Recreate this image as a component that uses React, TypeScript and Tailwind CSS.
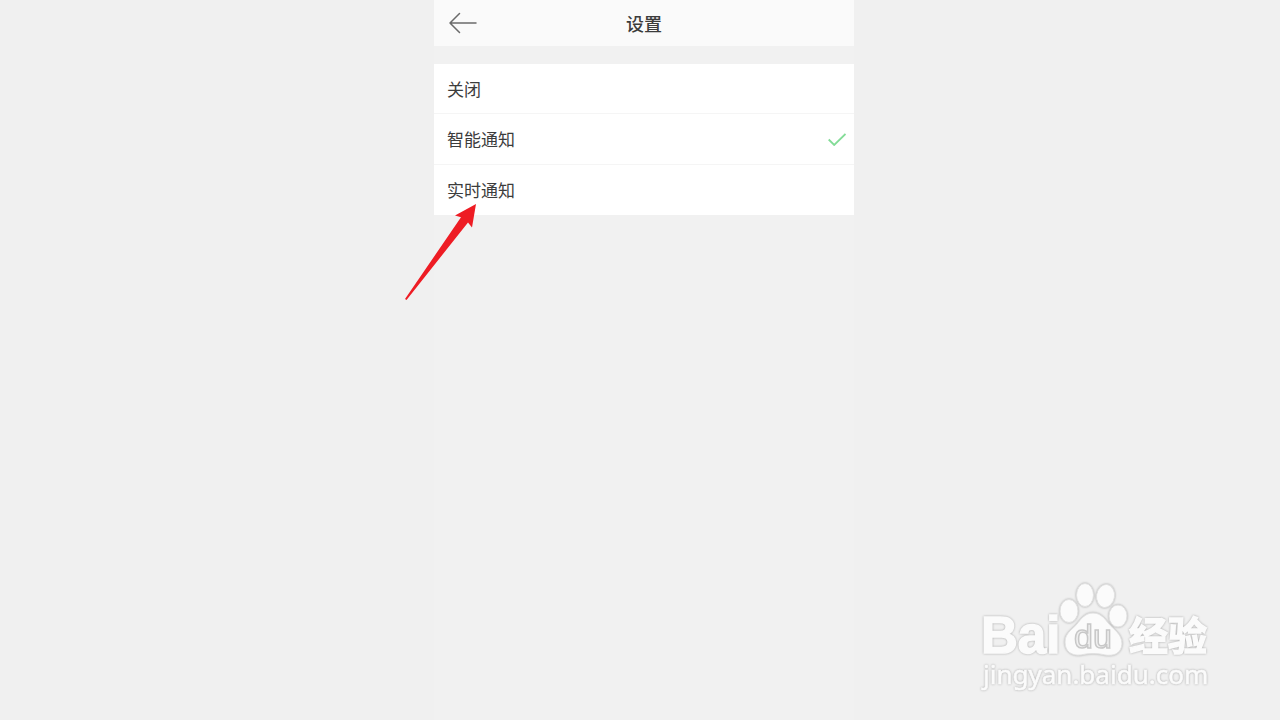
import { useState } from "react";

const options = [
  { id: "off", label: "关闭" },
  { id: "smart", label: "智能通知" },
  { id: "realtime", label: "实时通知" },
];

function Pointer() {
  return (
    <svg viewBox="0 0 72 96" className="pointer-events-none absolute top-[204px] -left-[29px] w-[72px]" aria-hidden="true">
      <path d="M71 0 L50 11.500 L56 13.300 L0 95 L1.500 96 L63 18.500 L67 23.500 Z" fill="#ee1c24" />
    </svg>
  );
}

function Watermark() {
  return (
    <svg
      viewBox="0 0 236 116"
      className="pointer-events-none absolute right-16 bottom-6 w-[236px] drop-shadow-[0_0_1px_#a8a8a8]"
      fill="#fbfbfb"
      aria-label="Baidu 经验 jingyan.baidu.com"
    >
      <g stroke="#fbfbfb" strokeWidth="1.5">
        <text x="1" y="73" fontSize="51" className="font-['Liberation_Sans',sans-serif] font-bold">Bai</text>
        <text x="149" y="70" fontSize="39" className="font-['Noto_Sans_CJK_SC',sans-serif] font-bold">经验</text>
      </g>
      <g stroke="#e2e2e2">
        <ellipse cx="89" cy="31" rx="9" ry="11.5" />
        <ellipse cx="105" cy="15" rx="8.5" ry="11.5" />
        <ellipse cx="125.5" cy="16" rx="9" ry="11.5" transform="rotate(8 125.5 16)" />
        <ellipse cx="138" cy="36" rx="9" ry="11" />
        <path d="M113 33 C121 33 125 39 129 44 C134 50 142 54 142 64 C141 75 132 76 125 75 C117 73 109 73 101 75 C92 76 85 72 85 62 C85 53 92 50 97 44 C101 39 105 33 113 33 Z" />
      </g>
      <text x="94" y="68" fontSize="34" fill="#f0f0f0" stroke="#c8c8c8" strokeWidth="1.5" className="font-['Liberation_Sans',sans-serif]">du</text>
      <text x="3" y="104" fontSize="26" stroke="#fbfbfb" strokeWidth="0.6" className="font-['Noto_Sans',sans-serif]">jingyan.baidu.com</text>
    </svg>
  );
}

export default function App() {
  const [selected, setSelected] = useState("smart");

  return (
    <div className="relative min-h-screen overflow-hidden bg-[#f0f0f0] pl-2 font-['Liberation_Sans','Noto_Sans_CJK_SC',sans-serif] text-[#3c3c3c]">
      <main className="relative mx-auto min-h-screen max-w-[420px] bg-[#f1f1f1]">
        <header className="grid h-[46px] grid-cols-[1fr_auto_1fr] items-center bg-[#fafafa] px-[15px]">
          <button type="button" aria-label="返回" className="w-7">
            <svg viewBox="0 0 28 22" fill="none" stroke="#6b6b6b" strokeWidth="1.5" strokeLinecap="round" strokeLinejoin="round">
              <path d="M27 11 H1 M10.500 1.500 L1 11 L10.500 20.500" />
            </svg>
          </button>
          <h1 className="pt-1 text-lg font-medium">设置</h1>
        </header>

        <div role="radiogroup" aria-label="通知" className="mt-[18px] divide-y divide-[#f5f5f5] bg-white">
          {options.map((option) => (
            <label
              key={option.id}
              htmlFor={option.id}
              className="flex h-[51px] items-center justify-between pr-2 pl-[13px] text-[17px] odd:h-[50px]"
            >
              <span className="pt-1">{option.label}</span>
              <input
                id={option.id}
                type="radio"
                name="notification"
                checked={selected === option.id}
                onChange={() => setSelected(option.id)}
                className="sr-only"
              />
              {selected === option.id && (
                <svg viewBox="0 0 18 14" className="w-[18px]" fill="none" stroke="#83dc97" strokeWidth="1.8" aria-hidden="true">
                  <path d="M0.700 7.500 L6.200 13 L17.500 2" />
                </svg>
              )}
            </label>
          ))}
        </div>

        <Pointer />
      </main>

      <Watermark />
    </div>
  );
}
